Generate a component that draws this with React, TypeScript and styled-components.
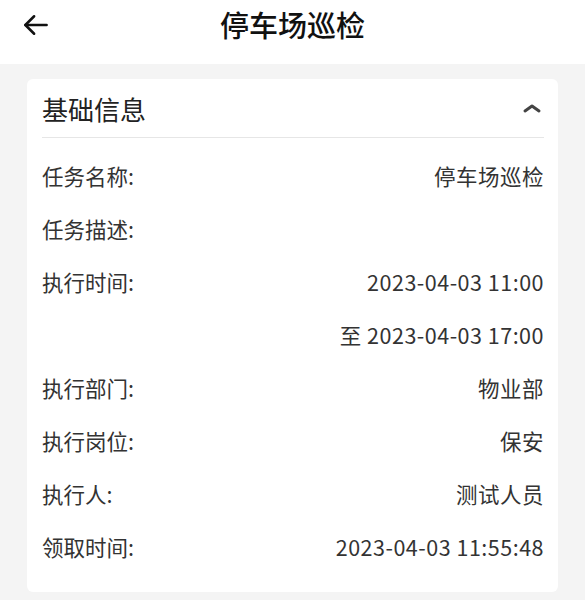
import React from 'react';
import styled, {createGlobalStyle} from 'styled-components';

const GlobalStyle = createGlobalStyle`
  html, body {
    margin: 0;
    padding: 0;
    background: #f4f4f4;
    font-family: "Noto Sans CJK SC", "Noto Sans", sans-serif;
  }
`;

type Item = {label: string; value: string};

const items: Item[] = [
  {label: '任务名称:', value: '停车场巡检'},
  {label: '任务描述:', value: ''},
  {label: '执行时间:', value: '2023-04-03 11:00'},
  {label: '', value: '至 2023-04-03 17:00'},
  {label: '执行部门:', value: '物业部'},
  {label: '执行岗位:', value: '保安'},
  {label: '执行人:', value: '测试人员'},
  {label: '领取时间:', value: '2023-04-03 11:55:48'},
];

export default function App() {
  return (
    <Page>
      <GlobalStyle />
      <NavBar>
        <Back>
          <svg width="30" height="30" viewBox="0 0 24 24" fill="none" stroke="#111" strokeWidth="2" strokeLinecap="round" strokeLinejoin="round">
            <path d="M20.5 12H3.5" />
            <path d="M10.5 5l-7 7 7 7" />
          </svg>
        </Back>
        <NavTitle>停车场巡检</NavTitle>
      </NavBar>
      <Body>
        <Card>
          <CardHead>
            <CardTitle>基础信息</CardTitle>
            <svg width="20" height="12" viewBox="0 0 20 12" fill="none" stroke="#444" strokeWidth="3" strokeLinecap="round" strokeLinejoin="round">
              <path d="M3 9l7-5 7 5" />
            </svg>
          </CardHead>
          <List>
            {items.map((it, i) => (
              <Row key={i}>
                <Label>{it.label}</Label>
                <Value>{it.value}</Value>
              </Row>
            ))}
          </List>
        </Card>
      </Body>
    </Page>
  );
}

const Page = styled.div`
  min-height: 600px;
  background: #f4f4f4;
`;

const NavBar = styled.header`
  height: 64px;
  background: #fff;
  display: flex;
  align-items: center;
  justify-content: center;
  position: relative;
`;

const Back = styled.span`
  position: absolute;
  left: 21px;
  top: 10px;
  display: flex;
`;

const NavTitle = styled.h1`
  margin: 0;
  font-size: 29px;
  font-weight: 500;
  color: #111;
  margin-top: -16px;
`;

const Body = styled.main`
  padding: 15px 27px 10px 27px;
`;

const Card = styled.section`
  background: #fff;
  border-radius: 6px;
  padding: 0 14px 19px 15px;
`;

const CardHead = styled.div`
  height: 58px;
  display: flex;
  align-items: center;
  justify-content: space-between;
  border-bottom: 1px solid #e6e6e6;
  padding-right: 2px;
`;

const CardTitle = styled.h2`
  margin: 0;
  font-size: 26px;
  font-weight: 400;
  color: #222;
`;

const List = styled.div`
  padding-top: 11px;
  display: flex;
  flex-direction: column;
`;

const Row = styled.div`
  height: 53px;
  display: flex;
  align-items: center;
  justify-content: space-between;
  font-size: 21.5px;
  color: #333;
`;

const Label = styled.span``;

const Value = styled.span`
  text-align: right;
  letter-spacing: 0.5px;
`;
